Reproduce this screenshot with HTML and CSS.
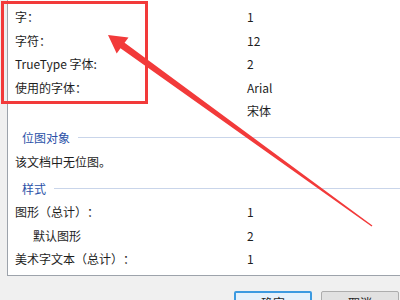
FILE: index.html
```html
<!DOCTYPE html>
<html lang="zh-CN">
<head>
    <meta charset="UTF-8">
    <title>文档属性</title>
    <link rel="stylesheet" href="styles.css">
</head>
<body>
    <div class="panel">
        <div class="row"><span class="label">字：</span><span class="value">1</span></div>
        <div class="row"><span class="label">字符：</span><span class="value">12</span></div>
        <div class="row"><span class="label">TrueType 字体:</span><span class="value">2</span></div>
        <div class="row"><span class="label">使用的字体：</span><span class="value">Arial</span></div>
        <div class="row"><span class="label"></span><span class="value">宋体</span></div>

        <div class="group">位图对象</div>
        <div class="row"><span class="label">该文档中无位图。</span></div>

        <div class="group">样式</div>
        <div class="row"><span class="label">图形（总计）：</span><span class="value">1</span></div>
        <div class="row sub"><span class="label">默认图形</span><span class="value">2</span></div>
        <div class="row"><span class="label">美术字文本（总计）：</span><span class="value">1</span></div>
    </div>

    <div class="buttons">
        <button class="btn default">确定</button>
        <button class="btn">取消</button>
    </div>

    <!-- 标注：红框和箭头 -->
    <div class="mark-box"></div>
    <svg class="mark-arrow" width="400" height="300" viewBox="0 0 400 300">
        <polygon fill="#f23a3a" points="108,35 128.5,37.4 124.6,42.7 372.4,225.4 371.6,226.6 120.5,48.3 116.7,53.6"/>
    </svg>
</body>
</html>
```

FILE: styles.css
```css
* {
    margin: 0;
    padding: 0;
    box-sizing: border-box;
}
body {
    width: 400px;
    height: 300px;
    overflow: hidden;
    position: relative;
    background: #f0f0f0;
    font-family: "Noto Sans CJK SC", "Microsoft YaHei", sans-serif;
    font-size: 12px;
    color: #1e1e1e;
    text-spacing-trim: space-all;
}
.panel {
    margin-left: 7px;
    height: 276px;
    padding: 5px 0 0 7px;
    background: #fff;
    border-left: 1px solid #9da3ab;
    border-bottom: 1px solid #9da3ab;
}
.row {
    display: flex;
    height: 23.5px;
    line-height: 23.5px;
}
.row .label {
    width: 232px;
    white-space: nowrap;
}
.row.sub .label {
    padding-left: 18px;
}
.group {
    display: flex;
    align-items: center;
    gap: 8px;
    height: 24px;
    margin-top: 3px;
    padding-left: 7px;
    color: #2b52a8;
}
.group::after {
    content: "";
    flex: 1;
    height: 1px;
    background: #c9d5ea;
}
.buttons {
    display: flex;
    gap: 9px;
    padding: 15px 0 0 234px;
}
.btn {
    width: 78px;
    height: 23px;
    font: inherit;
    color: #1e1e1e;
    background: #e1e1e1;
    border: 1px solid #adadad;
    border-radius: 2px;
}
.btn.default {
    background: #e5f1fb;
    border: 2px solid #3c9ae0;
}
.mark-box {
    position: absolute;
    left: 1px;
    top: 1px;
    width: 147px;
    height: 103px;
    border: 3px solid #f23a3a;
}
.mark-arrow {
    position: absolute;
    left: 0;
    top: 0;
}
```
